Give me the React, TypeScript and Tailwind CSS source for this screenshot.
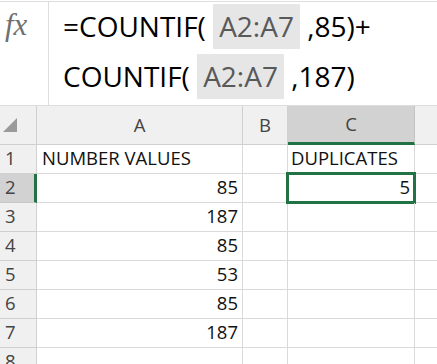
import React from "react";

const F = { fontFamily: '"Open Sans", "Liberation Sans", sans-serif' };

const rows: { n: number; a: string; c: string }[] = [
  { n: 1, a: "NUMBER VALUES", c: "DUPLICATES" },
  { n: 2, a: "85", c: "5" },
  { n: 3, a: "187", c: "" },
  { n: 4, a: "85", c: "" },
  { n: 5, a: "53", c: "" },
  { n: 6, a: "85", c: "" },
  { n: 7, a: "187", c: "" },
  { n: 8, a: "", c: "" },
];

function Ref({ children }: { children: React.ReactNode }) {
  return (
    <span className="inline-flex h-[45px] items-center bg-[#e6e6e6] px-[6px] text-[#595959]">
      {children}
    </span>
  );
}

export default function App() {
  return (
    <div className="relative h-[364px] w-[437px] overflow-hidden bg-white" style={F}>
      {/* formula bar */}
      <div className="mt-px flex h-[105px] border-y border-[#dedede]">
        <div className="flex w-[49px] shrink-0 border-r border-[#dedede] pl-[5px] pt-[7px]">
          <span
            className="text-[31px] italic leading-none text-[#707070]"
            style={{ fontFamily: '"Liberation Serif", serif' }}
          >
            fx
          </span>
        </div>
        <div className="flex flex-col pl-[14px] text-[28px] leading-[45px] text-black">
          <div className="mt-[2px] flex items-center whitespace-pre">
            <span>=COUNTIF( </span>
            <Ref>A2:A7</Ref>
            <span> ,85)+</span>
          </div>
          <div className="mt-[5px] flex items-center whitespace-pre">
            <span>COUNTIF( </span>
            <Ref>A2:A7</Ref>
            <span> ,187)</span>
          </div>
        </div>
      </div>

      {/* grid */}
      <div className="grid grid-cols-[37px_206px_45px_127px_1fr] grid-rows-[39px_repeat(8,29px)] text-[18.5px] text-[#111]">
        {/* header row */}
        <div className="relative border-b border-r border-[#d0d0d0] bg-[#f0f0f0]">
          <svg className="absolute left-[3px] top-[12px]" width="14" height="14" viewBox="0 0 14 14">
            <polygon points="14,0 14,14 0,14" fill="#9a9a9a" />
          </svg>
        </div>
        <div className="flex items-center justify-center border-b border-r border-[#d0d0d0] bg-[#f0f0f0] text-[#444]">
          A
        </div>
        <div className="flex items-center justify-center border-b border-r border-[#d0d0d0] bg-[#f0f0f0] text-[#444]">
          B
        </div>
        <div className="flex items-center justify-center border-b-[3px] border-r border-b-[#217346] border-r-[#c4c4c4] bg-[#d2d2d2] text-[#444]">
          C
        </div>
        <div className="border-b border-[#d0d0d0] bg-[#f0f0f0]" />

        {rows.map((r) => (
          <React.Fragment key={r.n}>
            <div
              className={
                r.n === 2
                  ? "flex items-end border-b border-r-[3px] border-b-[#c8c8c8] border-r-[#217346] bg-[#d2d2d2] pb-[1px] pl-[5px] text-[#444]"
                  : "flex items-end border-b border-r border-[#d0d0d0] bg-[#f0f0f0] pb-[1px] pl-[5px] text-[#444]"
              }
            >
              {r.n}
            </div>
            <div
              className={
                "flex items-end border-b border-r border-[#dadada] pb-[1px] " +
                (r.n === 1 ? "justify-start pl-[5px]" : "justify-end pr-[4px]")
              }
            >
              {r.a}
            </div>
            <div className="border-b border-r border-[#dadada]" />
            <div
              className={
                "relative flex items-end border-b border-r border-[#dadada] pb-[1px] " +
                (r.n === 1 ? "justify-start pl-[3px]" : "justify-end pr-[4px]")
              }
            >
              {r.n === 2 && (
                <div className="absolute -left-[2px] -top-[2px] h-[32px] w-[130px] border-[3px] border-[#217346]" />
              )}
              <span className="relative">{r.c}</span>
            </div>
            <div className="border-b border-[#dadada]" />
          </React.Fragment>
        ))}
      </div>
    </div>
  );
}
